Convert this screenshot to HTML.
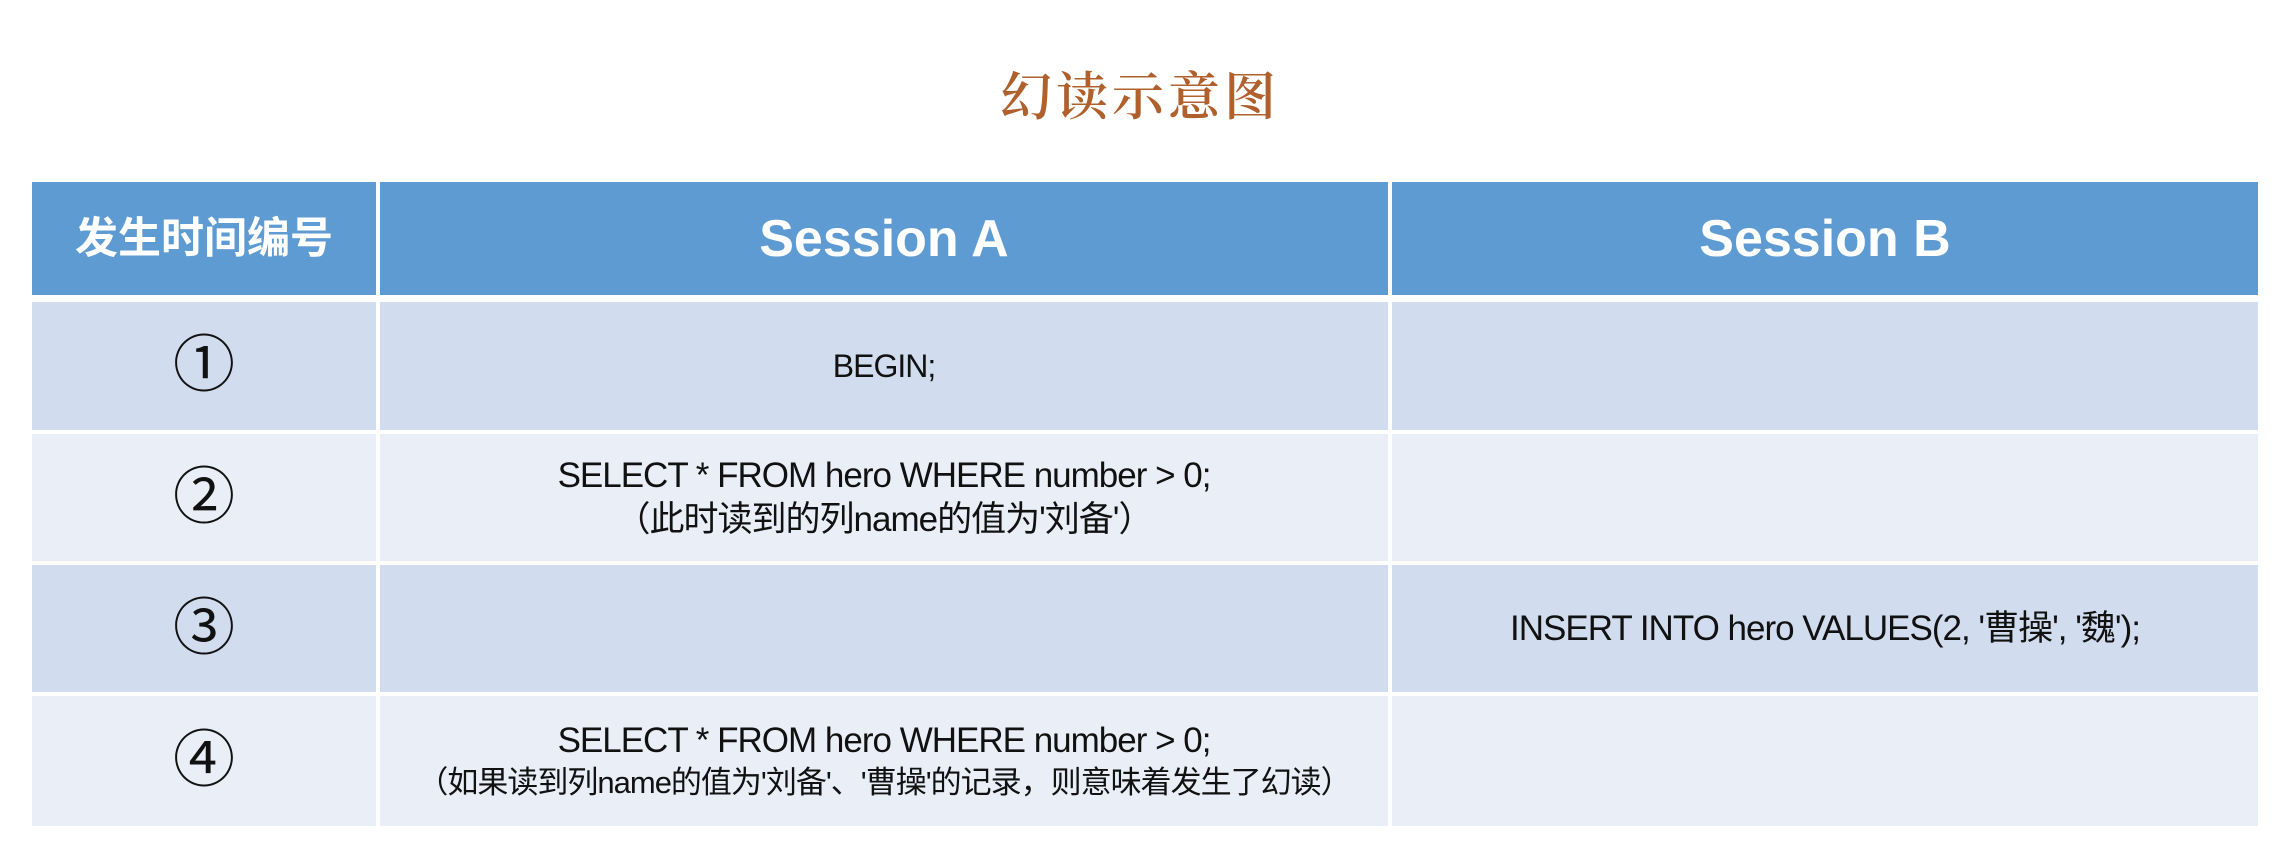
<!DOCTYPE html>
<html><head><meta charset="utf-8"><style>
html,body{margin:0;padding:0;background:#fff;width:2280px;height:846px;overflow:hidden}
body{position:relative;font-family:"Liberation Sans","Noto Sans CJK SC",sans-serif}
.title{position:absolute;left:0;width:2280px;top:58px;text-align:center;font-family:"Noto Serif CJK SC",serif;font-size:52px;font-weight:600;color:#b0602c;letter-spacing:4px;line-height:70px}
.c{position:absolute;display:flex;align-items:center;justify-content:center;text-align:center;color:#111;font-size:35px;line-height:44px;letter-spacing:-1px}
.h{background:#5f9bd3;color:#fff;font-weight:bold;letter-spacing:0}
.d{background:#d1ddee}
.l{background:#e9eef7}
.n{font-size:62px;font-weight:normal;letter-spacing:0}
</style></head><body>
<div class="title">幻读示意图</div>

<div class="c h" style="left:32px;top:182px;width:344px;height:113px;font-size:43px">发生时间编号</div>
<div class="c h" style="left:380px;top:182px;width:1008px;height:113px;font-size:52px">Session A</div>
<div class="c h" style="left:1392px;top:182px;width:866px;height:113px;font-size:52px">Session B</div>

<div class="c d n" style="left:32px;top:302px;width:344px;height:128px">①</div>
<div class="c d" style="left:380px;top:302px;width:1008px;height:128px;font-size:32px">BEGIN;</div>
<div class="c d" style="left:1392px;top:302px;width:866px;height:128px"></div>

<div class="c l n" style="left:32px;top:434px;width:344px;height:127px">②</div>
<div class="c l" style="left:380px;top:434px;width:1008px;height:127px">SELECT * FROM hero WHERE number &gt; 0;<br>（此时读到的列name的值为'刘备'）</div>
<div class="c l" style="left:1392px;top:434px;width:866px;height:127px"></div>

<div class="c d n" style="left:32px;top:565px;width:344px;height:127px">③</div>
<div class="c d" style="left:380px;top:565px;width:1008px;height:127px"></div>
<div class="c d" style="left:1392px;top:565px;width:866px;height:127px">INSERT INTO hero VALUES(2, '曹操', '魏');</div>

<div class="c l n" style="left:32px;top:696px;width:344px;height:130px">④</div>
<div class="c l" style="left:380px;top:696px;width:1008px;height:130px;flex-direction:column"><div>SELECT * FROM hero WHERE number &gt; 0;</div><div style="font-size:31px;line-height:40px">（如果读到列name的值为'刘备'、'曹操'的记录，则意味着发生了幻读）</div></div>
<div class="c l" style="left:1392px;top:696px;width:866px;height:130px"></div>
</body></html>
